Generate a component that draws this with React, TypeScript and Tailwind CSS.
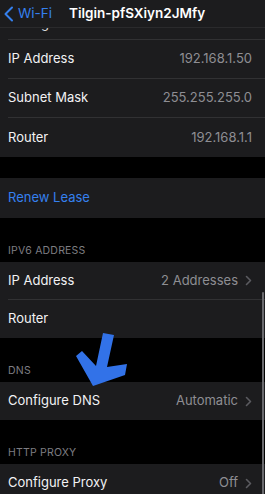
type RowProps = {
  label: string;
  value?: string;
  chevron?: boolean;
  last?: boolean;
  h?: string;
  blue?: boolean;
};

const Chevron = () => (
  <svg width="7" height="11" viewBox="0 0 7 11" className="shrink-0 ml-[7px]">
    <path d="M1.5 1.5 5.5 5.5 1.5 9.5" fill="none" stroke="#5b5b60" strokeWidth="1.6" strokeLinecap="round" strokeLinejoin="round" />
  </svg>
);

function Row({ label, value, chevron, last, h = "h-[38px]", blue }: RowProps) {
  return (
    <div className="bg-[#1c1c1e] pl-2">
      <div className={`${h} flex items-center justify-between pr-[13px] ${last ? "" : "border-b border-[#313133]"}`}>
        <span className={blue ? "text-[#3580ee]" : "text-[#f2f2f4]"}>{label}</span>
        {value && (
          <span className="flex items-center text-[#8e8e93]">
            {value}
            {chevron && <Chevron />}
          </span>
        )}
      </div>
    </div>
  );
}

function SectionHeader({ title }: { title: string }) {
  return (
    <div className="h-[44px] flex items-end px-2 pb-[5px] bg-black">
      <span className="text-[10.5px] leading-[12px] tracking-[0.2px] text-[#7d7d82]">{title}</span>
    </div>
  );
}

export default function App() {
  return (
    <div className="relative w-[265px] h-[494px] overflow-hidden bg-black font-['Inter',sans-serif] text-[13px]">
      <div className="h-[28px] bg-[#1c1c1e] border-b border-[#2a2a2c] flex items-center">
        <svg width="12" height="16" viewBox="0 0 12 16" className="ml-[3px]">
          <path d="M9 1.5 2.5 8 9 14.5" fill="none" stroke="#3580ee" strokeWidth="2" strokeLinecap="round" strokeLinejoin="round" />
        </svg>
        <span className="ml-[3px] text-[#3580ee] text-[13.5px]">Wi-Fi</span>
        <span className="ml-[17px] text-white font-semibold text-[13.5px]">Tilgin-pfSXiyn2JMfy</span>
      </div>

      {/* row scrolled under the nav bar, only descenders peek out */}
      <div className="bg-[#1c1c1e] pl-2">
        <div className="h-[12px] overflow-hidden border-b border-[#313133]">
          <div className="-mt-[14px] leading-[18px] text-[#d8d8dc]">Configure IPv4</div>
        </div>
      </div>
      <Row label="IP Address" value="192.168.1.50" h="h-[39px]" />
      <Row label="Subnet Mask" value="255.255.255.0" h="h-[39px]" />
      <Row label="Router" value="192.168.1.1" h="h-[39px]" last />

      <div className="h-[21px] bg-black" />
      <Row label="Renew Lease" blue h="h-[40px]" last />

      <SectionHeader title="IPV6 ADDRESS" />
      <Row label="IP Address" value="2 Addresses" chevron />
      <Row label="Router" last />

      <SectionHeader title="DNS" />
      <Row label="Configure DNS" value="Automatic" chevron last />

      <SectionHeader title="HTTP PROXY" />
      <Row label="Configure Proxy" value="Off" chevron last />

      <svg className="absolute left-0 top-0" width="265" height="494" viewBox="0 0 265 494">
        <polygon points="103,333 114,335 107,367 127,364 125,375 93,386 76,356 82,351 96,366" fill="#3272e8" />
      </svg>
      <div className="absolute right-[1px] top-[292px] w-[2px] h-[210px] rounded-full bg-[#6a6a6e]" />
    </div>
  );
}
